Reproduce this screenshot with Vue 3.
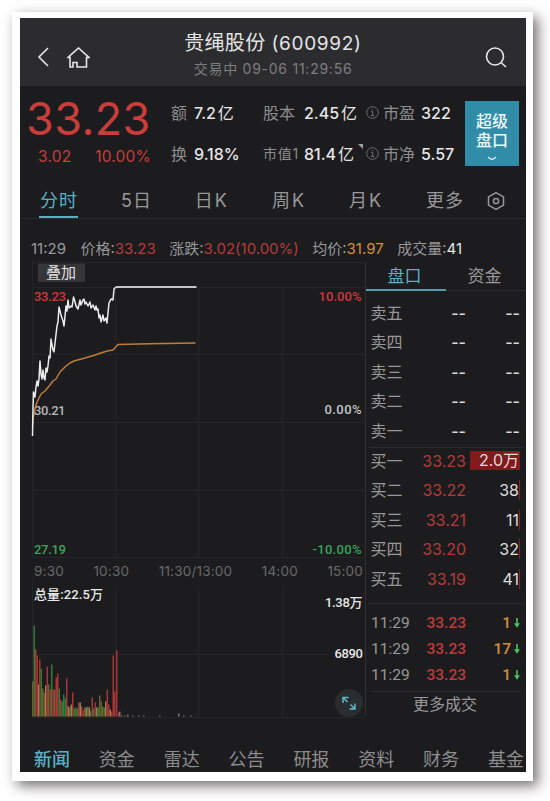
<template>
  <div class="frame">
    <div class="app">
      <header class="header">
        <svg class="back" width="12" height="20" viewBox="0 0 12 20">
          <path d="M11 1L2 10l9 9" />
        </svg>
        <svg class="home" width="23" height="21" viewBox="0 0 23 21">
          <path d="M3 10.500H1L11.500 1 22 10.500H19.500V20H10V15.500H6V20H3z" />
        </svg>
        <div class="title">
          <h1>贵绳股份 <span>(600992)</span></h1>
          <p>交易中 <span>09-06 11:29:56</span></p>
        </div>
        <svg class="search" width="23" height="21" viewBox="0 0 23 21">
          <circle cx="10" cy="9.500" r="8.500" />
          <path d="M16 15.500l5 4.500" />
        </svg>
      </header>

      <section class="summary">
        <div class="price">
          <div class="price-now">33.23</div>
          <div class="price-change"><span>3.02</span><span>10.00%</span></div>
        </div>
        <div class="stats">
          <template v-for="item in stats" :key="item.label">
            <span class="stat-label" :class="{ small: item.small }">
              <svg v-if="item.info" width="13" height="13" viewBox="0 0 13 13">
                <circle cx="6.500" cy="6.500" r="5.800" />
                <path d="M5.300 5.500h1.400v4M5 9.500h3.300M6.500 3v1.200" />
              </svg>
              {{ item.label }}
            </span>
            <span class="stat-value">{{ item.value }}<b v-if="item.unit">{{ item.unit }}</b><i v-if="item.corner"></i></span>
          </template>
        </div>
        <div class="super">
          <span>超级</span>
          <span>盘口</span>
          <svg width="10" height="5" viewBox="0 0 10 5"><path d="M1 1q4 4.500 8 0" /></svg>
        </div>
      </section>

      <nav class="periods">
        <span v-for="(p, i) in periods" :key="p" :class="{ active: i === 0 }">{{ p }}</span>
        <svg width="18" height="20" viewBox="0 0 18 20">
          <path d="M9 1.700l7.500 4.200v8.200L9 18.300l-7.500-4.200V5.900z" />
          <circle cx="9" cy="10" r="2.600" />
        </svg>
      </nav>

      <div class="info">
        <span class="info-time">11:29</span>
        <span>价格:<em class="red">33.23</em></span>
        <span>涨跌:<em class="red">3.02(10.00%)</em></span>
        <span>均价:<em class="orange">31.97</em></span>
        <span>成交量:<em class="white">41</em></span>
      </div>

      <main class="main">
        <div class="charts">
          <svg class="chart" width="346" height="300" viewBox="20 262 346 300">
            <g class="grid">
              <path v-for="y in [262.5, 287.5, 354.5, 422.5, 490.5, 557.5]" :key="y" :d="`M32 ${y}H365`" />
              <path v-for="x in [32.5, 115.5, 198.5, 282.5]" :key="x" :d="`M${x} ${x < 40 ? 262 : 287}V557`" />
            </g>
            <path class="edge" d="M365.500 262V562" />
            <text x="34" y="414.500" textLength="31.500" fill="#b5b5b6">30.21</text>
            <polyline class="avg-line" :points="avgLine" />
            <polyline class="price-line" :points="priceLine" />
            <path class="limit-line" d="M116 287H196.500" />
            <rect x="38" y="263.500" width="47" height="18.500" fill="#363638" />
            <text class="cjk" x="46" y="277.500" textLength="30" fill="#e2e2e2">叠加</text>
            <text x="34" y="300.500" textLength="32" fill="#d3353b">33.23</text>
            <text x="34" y="554" textLength="32" fill="#3ba35c">27.19</text>
            <text x="318.500" y="300.500" textLength="43" fill="#d3353b">10.00%</text>
            <text x="324.500" y="413.500" textLength="37" fill="#c3c3c3">0.00%</text>
            <text x="312.500" y="554" textLength="49" fill="#3ba35c">-10.00%</text>
          </svg>
          <div class="axis">
            <span v-for="t in ['9:30', '10:30', '11:30/13:00', '14:00', '15:00']" :key="t">{{ t }}</span>
          </div>
          <svg class="chart" width="346" height="139" viewBox="20 580 346 139">
            <g class="grid">
              <path d="M32.500 580V717M115.500 587V717M198.500 587V717M282.500 587V717M32 654.500H330M32 717.500H365" />
            </g>
            <path class="edge" d="M365.500 580V716" />
            <rect
              v-for="(b, i) in bars"
              :key="i"
              :x="b[0]"
              :y="716.5 - b[1]"
              width="1.500"
              :height="b[1]"
              :fill="colors[b[2]]"
            />
            <text x="34" y="598.500" textLength="69" fill="#e8e8e8">总量:22.5万</text>
            <text x="325" y="607" textLength="37.500" fill="#e8e8e8">1.38万</text>
            <text x="334.500" y="658" textLength="28.500" fill="#e8e8e8">6890</text>
            <circle cx="349" cy="703" r="14" fill="#2a2d30" />
            <path class="expand" d="M343 703V697.500H348.500M343 697.500L347.500 702M355 703.500V709H349.500M355 709L350.500 704.500" />
          </svg>
        </div>

        <aside class="book">
          <div class="book-tabs"><span class="active">盘口</span><span>资金</span></div>
          <div class="orders sell">
            <div v-for="n in ['五', '四', '三', '二', '一']" :key="n" class="order">
              <span>卖{{ n }}</span><b>--</b><b>--</b>
            </div>
          </div>
          <div class="orders buy">
            <div v-for="(o, i) in bids" :key="o.name" class="order">
              <span>{{ o.name }}</span>
              <strong>{{ o.price }}</strong>
              <b :class="i === 0 ? 'filled' : 'sliver'">{{ o.volume }}</b>
            </div>
          </div>
          <div class="trades">
            <div v-for="(v, i) in [1, 17, 1]" :key="i" class="trade">
              <span>11:29</span>
              <strong>33.23</strong>
              <b>{{ v }}</b>
              <svg width="6" height="10" viewBox="0 0 6 10">
                <path d="M3 0V7" stroke="#4cc35e" stroke-width="1.600" />
                <path d="M0 5.300H6L3 9.800z" fill="#4cc35e" />
              </svg>
            </div>
          </div>
          <div class="more">更多成交</div>
        </aside>
      </main>

      <footer class="footer">
        <span v-for="(t, i) in footerTabs" :key="t" :class="{ active: i === 0 }">{{ t }}</span>
      </footer>
    </div>
  </div>
</template>

<script setup>
const stats = [
  { label: '额', value: '7.2', unit: '亿' },
  { label: '股本', value: '2.45', unit: '亿' },
  { label: '市盈', value: '322', info: true },
  { label: '换', value: '9.18%' },
  { label: '市值1', value: '81.4', unit: '亿', small: true, corner: true },
  { label: '市净', value: '5.57', info: true }
]
const periods = ['分时', '5日', '日K', '周K', '月K', '更多']
const footerTabs = ['新闻', '资金', '雷达', '公告', '研报', '资料', '财务', '基金']
const bids = [
  { name: '买一', price: '33.23', volume: '2.0万' },
  { name: '买二', price: '33.22', volume: '38' },
  { name: '买三', price: '33.21', volume: '11' },
  { name: '买四', price: '33.20', volume: '32' },
  { name: '买五', price: '33.19', volume: '41' }
]

const priceLine = [
  '32.5,436 33,408 33.5,392 35,397 36,387 37,381 38,386 39,379 40,361 41,374 42,379 43,370 44,378 45,380',
  '46,368 47,372 48,366 49,356 50,358 51,339 52,345 53,350 54,352 55,343 57,326 58,322 59,307 60,311',
  '61,315 63,321 64,326 66,306 67,311 68,300 69,308 71,306 72,307 73.5,297 74.5,300 76,306 78,309 80,300',
  '81,305 83,300 84,299 85,304 86,302 88,306 90,302 91,308 93,305 95,310 96,306 97,310 98,309 99,318',
  '100,315 101,322 103,315 104,321 106,318 107,323 108,313 109,303 111,299 113,300 114,289 116,287'
].join(' ')
const avgLine =
  '32.5,425 33,418 34,414 36,405 38,400 41,394 45,391 50,385 53,381 56,379 60,372 66,366 70,363 74,361 85,358 95,355 107,351 113,350 118,344.5 150,343.8 195.5,343'

const colors = { r: '#a63537', g: '#347b38', o: '#686326', t: '#9b8056', w: '#777' }
// x、高度、颜色
const bars = [
  [32, 35, 'o'], [33.5, 91, 'g'], [35, 67, 'r'], [36.5, 61, 'r'], [38, 32, 't'], [39, 57, 'r'],
  [40.5, 48, 'g'], [42, 28, 'o'], [43.5, 24, 'o'], [45, 31, 't'], [46.5, 50, 'r'], [48, 32, 'o'],
  [49.5, 27, 'r'], [51, 52, 'g'], [52.5, 27, 'r'], [54, 27, 'o'], [55.5, 39, 'r'], [57, 43, 'r'],
  [58.5, 28, 'g'], [60, 17, 'r'], [61.5, 15, 'g'], [63, 22, 'g'], [64.5, 18, 'g'], [66, 38, 'r'],
  [67.5, 10, 't'], [69, 9, 'o'], [70.5, 12, 't'], [72, 24, 'r'], [73.5, 8, 'g'], [75, 9, 'g'],
  [76.5, 8, 'o'], [78, 14, 'r'], [79.5, 14, 't'], [81, 10, 'r'], [82.5, 6, 'r'], [84, 9, 'o'],
  [85.5, 9, 't'], [87, 10, 'o'], [88.5, 9, 't'], [90, 6, 'g'], [91.5, 19, 'r'], [93, 8, 'g'],
  [94.5, 14, 'r'], [96, 9, 't'], [97.5, 9, 'g'], [99, 21, 'o'], [100.5, 15, 'o'], [102, 10, 'g'],
  [103.5, 9, 'o'], [105, 15, 't'], [106.5, 27, 'r'], [108, 12, 'r'], [109.5, 7, 't'], [111, 5, 'r'],
  [112.5, 61, 'r'], [114, 25, 'r'], [116, 66, 'r'], [118, 4, 'r'], [119, 5, 'w'], [121, 1, 'w'],
  [124, 1, 'w'], [127, 2, 'w'], [132, 1, 'w'], [138, 1, 'w'], [143, 1, 'w'], [159, 1, 'w'],
  [178, 3, 'w'], [183, 1, 'w'], [190, 1, 'w']
]
</script>

<style>
body {
  display: flow-root;
  box-sizing: border-box;
  height: 100vh;
  background: #fff;
}
</style>

<style scoped>
.frame {
  box-sizing: border-box;
  width: 521px;
  height: 769px;
  margin: 12px 0 0 12px;
  padding: 6px 7px 9px 8px;
  background: #fff;
  box-shadow: 5px 5px 12px rgba(30, 20, 25, 0.6);
}

.app {
  width: 506px;
  height: 754px;
  overflow: hidden;
  background: #1c1c1e;
  color: #98989a;
  font-family: Inter, 'Noto Sans CJK SC', sans-serif;
  font-size: 15px;
  line-height: 20px;
  white-space: nowrap;
}

svg {
  display: block;
  flex: none;
}

.header {
  box-sizing: border-box;
  display: flex;
  height: 68px;
  padding: 0 18px 0 17px;
  align-items: flex-start;
  background: #2c2c2e;
}

.header svg {
  margin-top: 29px;
  fill: none;
  stroke: #e6e6e6;
  stroke-width: 1.600;
}

.header .home {
  margin-left: 18px;
}

.title {
  width: 180px;
  margin: 12px auto 0 93px;
  text-align: center;
}

.title h1 {
  margin: 0;
  color: #e4e4e5;
  font-size: 20px;
  font-weight: 400;
  line-height: 26px;
  letter-spacing: 0.300px;
}

.title h1 span {
  font-size: 19px;
  letter-spacing: 0.700px;
}

.title p {
  margin: 2px 0 0;
  color: #7e7e80;
  font-size: 14px;
  line-height: 20px;
  letter-spacing: 0.750px;
}

.summary {
  display: flex;
  height: 94px;
}

.price {
  width: 151px;
  color: #c93d3b;
}

.price-now {
  margin-top: 10px;
  padding-left: 6px;
  font-size: 45px;
  line-height: 45px;
  letter-spacing: 0.400px;
}

.price-change {
  display: flex;
  justify-content: space-between;
  margin: 6px 20px 0 18px;
  font-size: 15.500px;
  letter-spacing: 0.200px;
}

.stats {
  display: grid;
  grid-template-columns: 23px 69px 41px 62px 55px 44px;
  grid-template-rows: 41px 41px;
  align-items: center;
  padding-top: 6px;
}

.stat-label {
  display: flex;
  align-items: center;
  gap: 4px;
  font-size: 16px;
  color: #8d8d8f;
}

.stat-label.small {
  font-size: 14px;
  letter-spacing: 0.700px;
}

.stat-label svg {
  fill: none;
  stroke: #6f6f71;
}

.stat-value {
  display: flex;
  align-items: center;
  color: #e6e6e7;
  font-size: 16px;
  font-weight: 500;
}

.stat-value b {
  margin-left: 2px;
  font-weight: 400;
}

.stat-value i {
  align-self: flex-start;
  margin-left: 4px;
  border-top: 5px solid #a0a0a0;
  border-left: 5px solid transparent;
}

.super {
  display: flex;
  flex-direction: column;
  align-items: center;
  box-sizing: border-box;
  width: 54px;
  height: 65px;
  margin-top: 15px;
  padding-top: 11px;
  background: #318ca7;
  color: #f0f7f8;
  font-size: 16px;
  font-weight: 500;
  line-height: 19px;
}

.super svg {
  margin-top: 6px;
  fill: none;
  stroke: #d8ecf0;
  stroke-width: 1.300;
}

.periods {
  box-sizing: border-box;
  display: flex;
  justify-content: space-between;
  height: 39px;
  padding: 0 21px 0 19px;
  border-bottom: 1px solid #2b2b2d;
  font-size: 18px;
  line-height: 41px;
}

.periods span {
  letter-spacing: 1px;
}

.periods span:nth-child(n + 3):nth-child(-n + 5) {
  letter-spacing: 2px;
}

.periods svg {
  margin: 11px 0 0 -20px;
  fill: none;
  stroke: #98989a;
  stroke-width: 1.500;
}

.periods .active {
  box-sizing: border-box;
  height: 38px;
  padding: 0 0 0 1px;
  border-bottom: 2px solid #58aec1;
  color: #58b1c5;
}

.info {
  display: flex;
  height: 43px;
  padding: 20px 0 0 11px;
  box-sizing: border-box;
  gap: 13.500px;
}

.info-time {
  margin-right: 1px;
}

.info em {
  font-style: normal;
}

.info .red {
  color: #b53b3b;
}

.info .orange {
  color: #d58e3b;
}

.info .white {
  color: #e6e6e6;
}

.main {
  display: flex;
  height: 457px;
}

.charts {
  width: 346px;
}

.chart text {
  font-family: Roboto, 'Noto Sans CJK SC', sans-serif;
  font-size: 13px;
  font-weight: 500;
}

.chart text.cjk {
  font-size: 15px;
  font-weight: 400;
}

.grid {
  fill: none;
  stroke: #252527;
}

.edge {
  stroke: #303032;
}

.price-line,
.avg-line,
.limit-line {
  fill: none;
  stroke: #ececec;
  stroke-width: 1.500;
  stroke-linejoin: round;
}

.avg-line {
  stroke: #bd7d39;
}

.limit-line {
  stroke: #c4c4c6;
  stroke-width: 2;
}

.expand {
  fill: none;
  stroke: #62bdca;
  stroke-width: 1.400;
}

.axis {
  display: flex;
  justify-content: space-between;
  box-sizing: border-box;
  height: 18px;
  padding: 0 2px 0 14px;
  border-right: 1px solid #303032;
  color: #69696b;
  font-size: 13.500px;
  line-height: 18px;
  letter-spacing: 0.200px;
}

.book {
  width: 160px;
}

.book-tabs {
  display: flex;
  box-sizing: border-box;
  height: 29px;
  border-bottom: 1px solid #2b2b2d;
  font-size: 17px;
  line-height: 28px;
}

.book-tabs span {
  box-sizing: border-box;
  width: 80px;
  height: 29px;
  padding-right: 3px;
  text-align: center;
}

.book-tabs .active {
  border-bottom: 2px solid #509bad;
  color: #58b1c5;
}

.orders {
  margin: 0 3px;
}

.sell {
  height: 147px;
  padding-top: 9px;
  border-bottom: 1px solid #2b2b2d;
}

.buy {
  height: 157px;
  border-bottom: 1px solid #2b2b2d;
}

.order {
  display: grid;
  grid-template-columns: 38px 57.500px 54px;
  align-items: center;
  height: 29.500px;
  padding-left: 1.500px;
  font-size: 16px;
}

.order:first-child {
  margin-top: -2px;
}

.order b,
.order strong {
  font-weight: 400;
  text-align: right;
  color: #dcdcdd;
}

.order strong {
  color: #b53b3b;
}

.sell .order b {
  font-weight: 500;
}

.order .filled {
  justify-self: end;
  box-sizing: border-box;
  width: 50px;
  height: 19px;
  padding-right: 1px;
  background: #811b1b;
  line-height: 19px;
}

.order .sliver {
  margin-left: 4px;
  border-right: 1px solid #8b2020;
}

.trades {
  height: 88px;
  margin: 0 5px;
  padding-top: 6px;
  box-sizing: border-box;
  border-bottom: 1px solid #2b2b2d;
}

.trade {
  display: grid;
  grid-template-columns: 42px 53px 45px 9px;
  align-items: center;
  height: 26px;
  font-family: Roboto, sans-serif;
  font-size: 15.500px;
}

.trade strong,
.trade b {
  font-weight: 500;
  text-align: right;
}

.trade strong {
  color: #bd3b3b;
}

.trade b {
  color: #d58e3b;
}

.trade svg {
  justify-self: end;
}

.more {
  margin: 0 7px 0 5px;
  height: 25px;
  line-height: 25px;
  font-size: 16px;
  text-align: center;
}

.footer {
  display: flex;
  justify-content: space-between;
  padding: 28px 2px 0 14px;
  font-size: 18px;
  line-height: 26px;
  color: #8d8d8f;
}

.footer .active {
  color: #58b1c5;
  font-weight: 500;
}
</style>
